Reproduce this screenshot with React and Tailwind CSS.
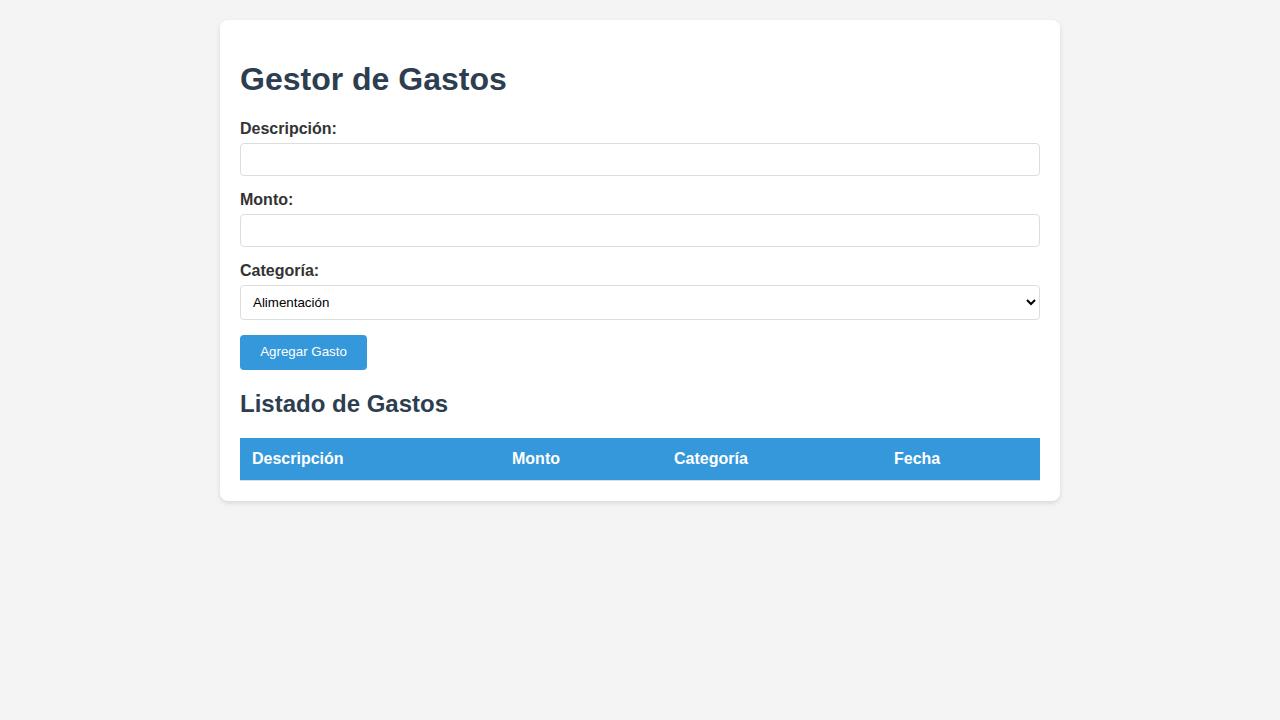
export default function App() {
  return (
    <div className="min-h-screen bg-[#f4f4f4] pt-5 font-['Liberation_Sans',Arial,sans-serif] text-[#333]">
      <div className="mx-auto w-[840px] rounded-lg bg-white p-5 shadow-[0_2px_5px_rgba(0,0,0,0.12)]">
        <h1 className="my-[21.44px] text-[32px] font-bold leading-[37px] text-[#2c3e50]">
          Gestor de Gastos
        </h1>

        <div className="mb-[15px]">
          <label className="mb-[5px] block text-base font-bold leading-[18px]">Descripción:</label>
          <input
            type="text"
            className="block h-[33px] w-full rounded border border-[#ddd] bg-white px-2 text-[13.33px]"
          />
        </div>

        <div className="mb-[15px]">
          <label className="mb-[5px] block text-base font-bold leading-[18px]">Monto:</label>
          <input
            type="number"
            className="block h-[33px] w-full rounded border border-[#ddd] bg-white px-2 text-[13.33px]"
          />
        </div>

        <div className="mb-[15px]">
          <label className="mb-[5px] block text-base font-bold leading-[18px]">Categoría:</label>
          <select className="block h-[35px] w-full rounded border border-[#ddd] bg-white px-2 text-[13.33px] text-black">
            <option>Alimentación</option>
            <option>Transporte</option>
            <option>Vivienda</option>
            <option>Entretenimiento</option>
            <option>Otros</option>
          </select>
        </div>

        <button className="h-[35px] w-[127px] rounded bg-[#3498db] text-[13.33px] text-white">
          Agregar Gasto
        </button>

        <h2 className="my-[20px] text-2xl font-bold leading-[28px] text-[#2c3e50]">
          Listado de Gastos
        </h2>

        <table className="w-full border-collapse">
          <thead>
            <tr className="bg-[#3498db] text-left text-white">
              <th className="w-[260px] border-b border-[#ddd] p-3 text-base leading-[18px] font-bold">Descripción</th>
              <th className="w-[162px] border-b border-[#ddd] p-3 text-base leading-[18px] font-bold">Monto</th>
              <th className="w-[220px] border-b border-[#ddd] p-3 text-base leading-[18px] font-bold">Categoría</th>
              <th className="border-b border-[#ddd] p-3 text-base leading-[18px] font-bold">Fecha</th>
            </tr>
          </thead>
          <tbody></tbody>
        </table>
      </div>
    </div>
  );
}
